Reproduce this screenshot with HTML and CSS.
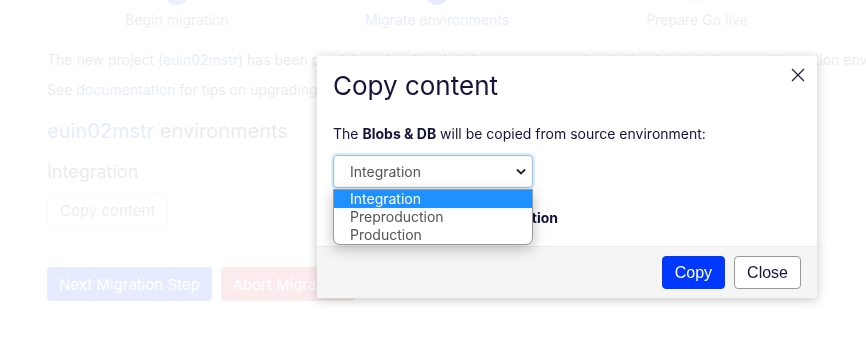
FILE: index.html
```html
<!DOCTYPE html>
<html lang="en">
<head>
    <meta charset="UTF-8">
    <meta name="viewport" content="width=device-width, initial-scale=1.0">
    <title>Migration</title>
    <link rel="stylesheet" href="styles.css">
</head>
<body>
    <div class="page">
        <div class="steps">
            <div class="step done"><span class="dot"></span><span class="step-label">Begin migration</span></div>
            <div class="step active"><span class="dot"></span><span class="step-label">Migrate environments</span></div>
            <div class="step"><span class="dot"></span><span class="step-label">Prepare Go live</span></div>
        </div>
        <p class="lead">The new project (<a href="#">euin02mstr</a>) has been provisioned and updated, you can now migrate the data into the new integration environment.</p>
        <p class="lead">See <a href="#">documentation</a> for tips on upgrading your solution.</p>
        <h2 class="env-title"><a href="#">euin02mstr</a> environments</h2>
        <h3 class="env-name">Integration</h3>
        <button type="button" class="btn-outline">Copy content</button>
        <hr class="divider">
        <div class="actions">
            <button type="button" class="btn btn-primary">Next Migration Step</button>
            <button type="button" class="btn btn-danger">Abort Migration</button>
        </div>
    </div>

    <div class="backdrop">
        <div class="modal">
            <div class="modal-header">
                <h1>Copy content</h1>
                <button type="button" class="modal-close" aria-label="Close">
                    <svg width="14" height="14" viewBox="0 0 14 14"><path d="M1 1L13 13M13 1L1 13" stroke="#1b1b45" stroke-width="1.2" fill="none"/></svg>
                </button>
            </div>
            <div class="modal-body">
                <p>The <b>Blobs &amp; DB</b> will be copied from source environment:</p>
                <div class="select-wrap">
                    <div class="select">
                        <span>Integration</span>
                        <svg width="10" height="7" viewBox="0 0 10 7"><path d="M1 1.5L5 5.5L9 1.5" stroke="#222" stroke-width="1.8" fill="none"/></svg>
                    </div>
                    <ul class="options">
                        <li class="selected">Integration</li>
                        <li>Preproduction</li>
                        <li>Production</li>
                    </ul>
                </div>
                <p class="target"><b>Target environment: Production</b></p>
            </div>
            <div class="modal-footer">
                <button type="button" class="mbtn mbtn-primary">Copy</button>
                <button type="button" class="mbtn mbtn-light">Close</button>
            </div>
        </div>
    </div>
</body>
</html>
```

FILE: styles.css
```css
*{margin:0;padding:0;box-sizing:border-box;}
body{font-family:Inter, "Noto Sans", sans-serif;color:#3a2f36;background:#fff;overflow:hidden;}
a{color:#0038ff;text-decoration:none;}

.page{padding-left:47px;width:1000px;}
.steps{display:grid;grid-template-columns:repeat(3,260px);}
.step{display:flex;flex-direction:column;align-items:center;}
.dot{width:24px;height:24px;border-radius:50%;background:#ccc;margin-top:-19px;}
.step.done .dot{background:#3b5bff;}
.step.active .dot{background:#0038ff;}
.step-label{font-size:14px;line-height:20px;margin-top:5px;color:#4a4a4a;}
.step.active .step-label{color:#0038ff;}
.lead{font-size:14px;line-height:20px;white-space:nowrap;}
.lead:first-of-type{margin-top:20px;}
.lead + .lead{margin-top:10px;}
.env-title{font-size:20px;line-height:28px;font-weight:400;margin-top:17px;}
.env-name{font-size:18px;line-height:26px;font-weight:400;margin-top:14px;}
.btn-outline{margin-top:8px;height:34px;padding:0 12px;font:15px Inter, sans-serif;color:#4a4a4a;background:#fff;border:1px solid #ccc;border-radius:4px;}
.divider{border:none;border-top:1px solid #eee;margin-top:19px;width:820px;}
.actions{display:flex;gap:9px;margin-top:20px;}
.btn{height:34px;padding:0 12px;font:15px Inter, sans-serif;color:#fff;border:none;border-radius:4px;}
.btn-primary{background:#0038ff;}
.btn-danger{background:#d9363e;}

.backdrop{position:fixed;inset:0;background:rgba(255,255,255,0.9);}
.modal{width:500px;margin:56px 0 0 317px;background:#fff;box-shadow:0 2px 10px rgba(0,0,0,0.22);color:#14143c;}
.modal-header{display:flex;justify-content:space-between;align-items:flex-start;padding:14px 10px 0 16px;}
.modal-header h1{font-size:26px;line-height:32px;font-weight:400;}
.modal-close{background:none;border:none;margin-top:-4px;width:18px;height:18px;display:flex;align-items:center;justify-content:center;}
.modal-body{padding:22px 16px 18px;font-size:14px;line-height:20px;}
.select-wrap{position:relative;margin-top:11px;width:200px;}
.select{height:33px;border:1px solid #8cc0f7;border-radius:4px;box-shadow:0 0 0 2px rgba(120,180,245,0.25);display:flex;align-items:center;justify-content:space-between;padding:0 6px 0 16px;color:#555;font-size:14px;}
.options{position:absolute;left:0;top:34px;width:200px;list-style:none;background:#fff;border:1px solid #9a9a9a;border-radius:0 0 7px 7px;box-shadow:0 4px 14px rgba(0,0,0,0.25);overflow:hidden;z-index:2;}
.options li{font-size:14px;line-height:18px;padding-left:16px;color:#555;}
.options li.selected{background:#1e90ff;color:#fff;}
.target{margin-top:20px;word-spacing:4px;}
.modal-footer{display:flex;justify-content:flex-end;gap:9px;padding:9px 16px;background:#f5f5f5;border-top:1px solid #ebebeb;}
.mbtn{height:33px;padding:0 12px;font:16px "Liberation Sans", Arial, sans-serif;border-radius:4px;}
.mbtn-primary{background:#0038ff;color:#fff;border:1px solid #0038ff;}
.mbtn-light{background:#fff;color:#14143c;border:1px solid #999;}
```
